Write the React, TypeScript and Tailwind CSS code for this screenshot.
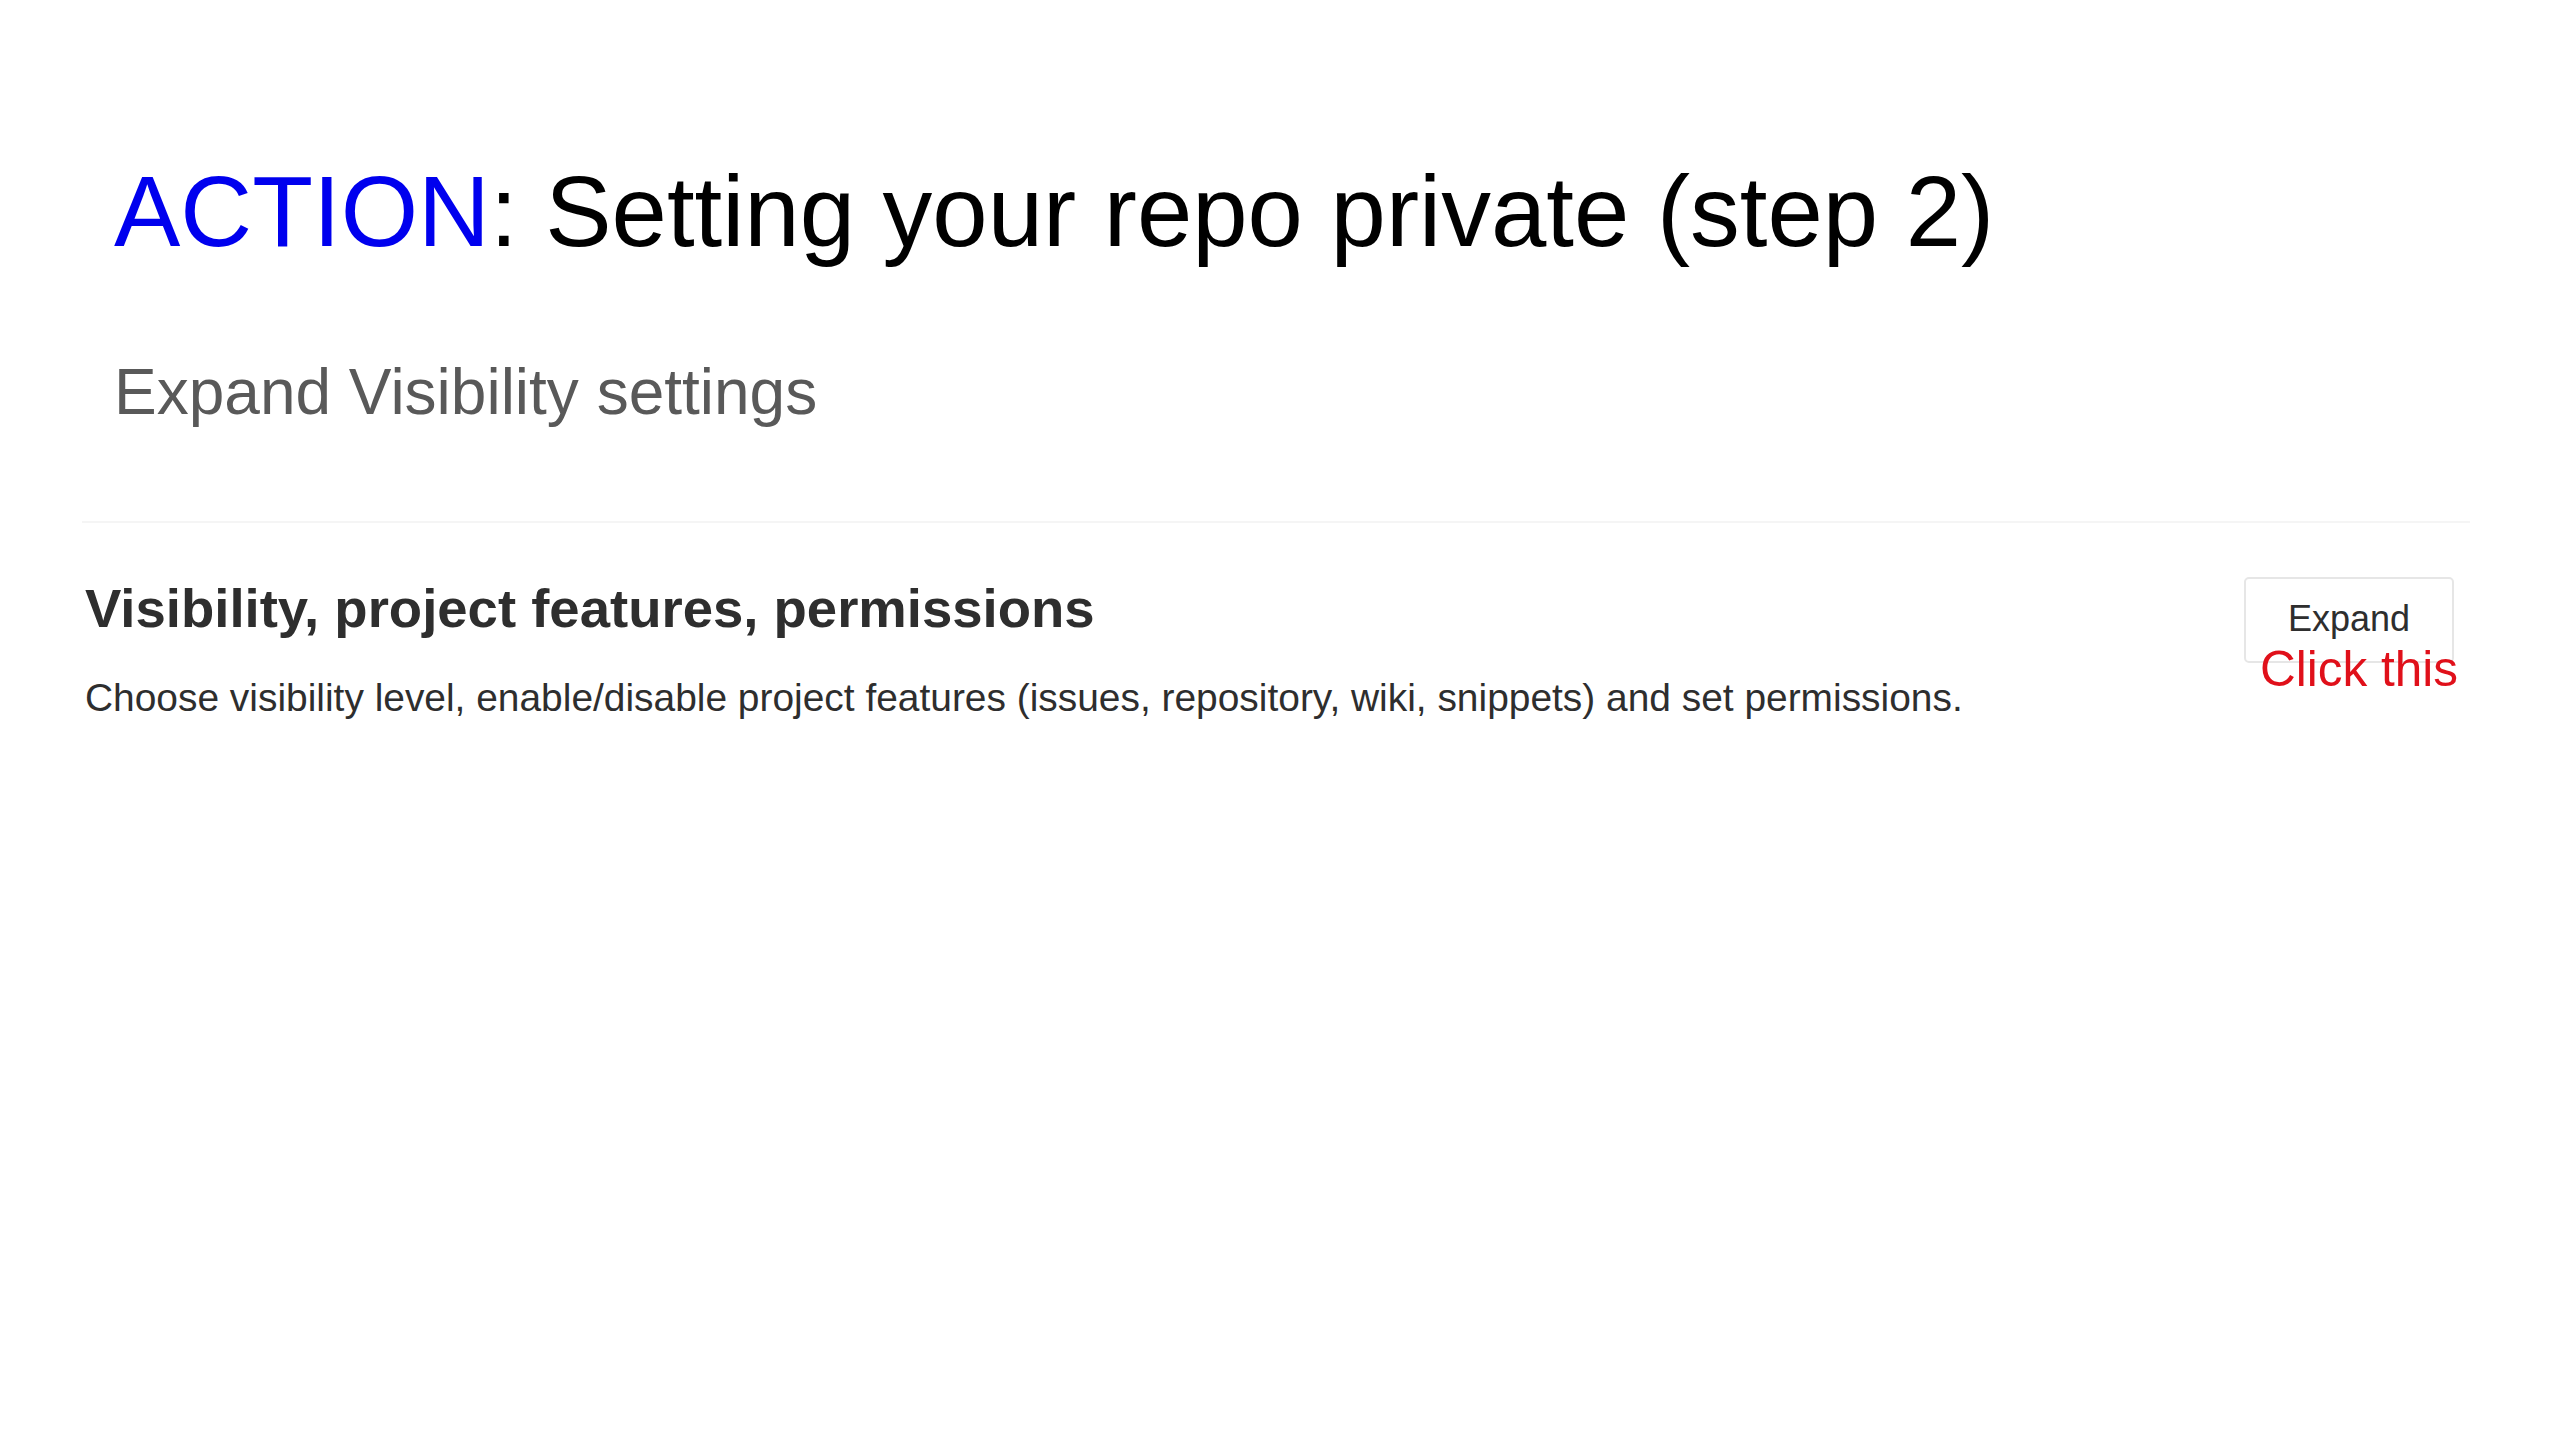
import React from "react";

export default function App() {
  return (
    <div
      className="w-[2560px] h-[1440px] bg-white overflow-hidden"
      style={{ fontFamily: '"Liberation Sans", Arial, Helvetica, sans-serif' }}
    >
      <div className="px-[114px] pt-[162px]">
        <h1 className="text-[99.5px] leading-none text-black font-normal whitespace-nowrap">
          <span className="text-[#0000ee]">ACTION</span>: Setting your repo private (step 2)
        </h1>
        <p className="mt-[98px] text-[64px] leading-none text-[#595959] whitespace-nowrap">
          Expand Visibility settings
        </p>
      </div>

      <section className="ml-[82px] mr-[90px] mt-[97px] border-t-2 border-[#f5f5f5]">
        <div className="flex items-start justify-between pl-[3px] pr-[16px] pt-[54px]">
          <div className="mt-[5px]">
            <h2 className="text-[54.5px] leading-none font-bold text-[#2e2e2e] whitespace-nowrap">
              Visibility, project features, permissions
            </h2>
            <p className="mt-[43px] text-[38.9px] leading-none text-[#2e2e2e] whitespace-nowrap">
              Choose visibility level, enable/disable project features (issues, repository, wiki, snippets) and set permissions.
            </p>
          </div>
          <div className="relative">
            <button className="w-[210px] h-[86px] rounded-[5px] border-2 border-[#e6e6e6] bg-white text-[36px] leading-none text-[#2e2e2e] flex items-center justify-center pb-[2px]">
              Expand
            </button>
            <span className="absolute left-[16px] top-[67px] text-[49.5px] leading-none text-[#e0101a] whitespace-nowrap">
              Click this
            </span>
          </div>
        </div>
      </section>
    </div>
  );
}
